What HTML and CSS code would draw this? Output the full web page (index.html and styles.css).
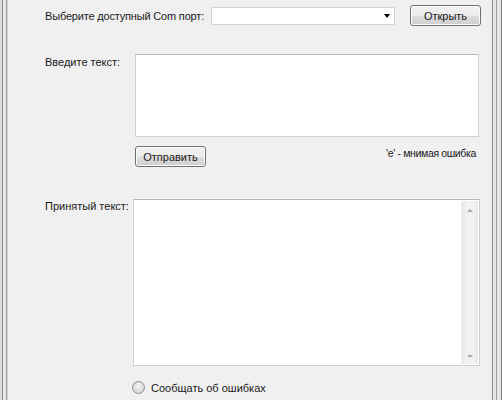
FILE: index.html
```html
<!DOCTYPE html>
<html lang="ru">
<head>
<meta charset="utf-8">
<title>Com port</title>
<link rel="stylesheet" href="styles.css">
</head>
<body>
<div class="frame">
  <div class="row row-port">
    <span class="label label-port">Выберите доступный Com порт:</span>
    <div class="combo"><span class="combo-arrow"></span></div>
    <button class="btn btn-open">Открыть</button>
  </div>
  <div class="row row-send">
    <span class="label label-send">Введите текст:</span>
    <div class="textbox textbox-send"></div>
  </div>
  <div class="row row-action">
    <button class="btn btn-send">Отправить</button>
    <span class="hint">'e' - мнимая ошибка</span>
  </div>
  <div class="row row-recv">
    <span class="label label-recv">Принятый текст:</span>
    <div class="textbox textbox-recv">
      <div class="scrollbar">
        <span class="arrow-up"></span>
        <span class="arrow-down"></span>
      </div>
    </div>
  </div>
  <div class="row row-radio">
    <span class="radio"></span>
    <span class="radio-label">Сообщать об ошибках</span>
  </div>
</div>
</body>
</html>
```
FILE: styles.css
```css
html, body {
  margin: 0;
  padding: 0;
  background: #f0f0f0;
}
.frame {
  width: 502px;
  height: 400px;
  box-sizing: border-box;
  overflow: hidden;
  background: #f0f0f0;
  font-family: "Liberation Sans", Arial, sans-serif;
  font-size: 11px;
  color: #1a1a1a;
  box-shadow:
    inset 2px 0 0 #dcdcdc,
    inset 3px 0 0 #8c8c8c,
    inset 6px 0 0 #e6e6e6,
    inset 7px 0 0 #a3a3a3,
    inset 8px 0 0 #d0d0d0,
    inset -1px 0 0 #7a7a7a,
    inset -5px 0 0 #e6e6e6,
    inset -6px 0 0 #a3a3a3,
    inset -9px 0 0 #e6e6e6,
    inset -10px 0 0 #8c8c8c;
}
.row {
  display: flex;
}
.row-port {
  align-items: center;
  padding: 5px 0 0 45px;
  height: 21px;
}
.label-port {
  width: 166px;
  padding-top: 1px;
  letter-spacing: -0.18px;
}
.combo {
  position: relative;
  width: 184px;
  height: 18px;
  box-sizing: border-box;
  background: #fff;
  border: 1px solid #d2d2d2;
  margin-right: 15px;
}
.combo-arrow {
  position: absolute;
  right: 4px;
  top: 6px;
  width: 0;
  height: 0;
  border-left: 3.5px solid transparent;
  border-right: 3.5px solid transparent;
  border-top: 4px solid #000;
}
.btn {
  width: 71px;
  height: 21px;
  box-sizing: border-box;
  padding: 0;
  border: 1px solid #707070;
  border-radius: 3px;
  background: linear-gradient(#f2f2f2 0%, #ebebeb 50%, #dddddd 51%, #cfcfcf 100%);
  box-shadow: inset 0 0 0 1px #fcfcfc;
  font-family: "Liberation Sans", Arial, sans-serif;
  font-size: 11px;
  color: #1a1a1a;
}
.row-send {
  margin-top: 28px;
  padding-left: 45px;
}
.label-send {
  width: 90px;
  padding-top: 2px;
}
.textbox {
  box-sizing: border-box;
  background: #fff;
  border: 1px solid #d0d0d0;
  border-top-color: #b5b5b5;
}
.textbox-send {
  width: 344px;
  height: 83px;
}
.row-action {
  margin-top: 9px;
  padding-left: 135px;
  width: 341px;
  justify-content: space-between;
  align-items: flex-start;
}
.hint {
  padding-top: 1px;
  font-size: 10.5px;
  letter-spacing: -0.35px;
}
.row-recv {
  margin-top: 32px;
  padding-left: 45px;
}
.label-recv {
  width: 88px;
  padding-top: 1px;
}
.textbox-recv {
  width: 347px;
  height: 167px;
  display: flex;
  justify-content: flex-end;
  padding: 1px;
}
.scrollbar {
  width: 17px;
  display: flex;
  flex-direction: column;
  justify-content: space-between;
  align-items: center;
  background: linear-gradient(90deg, #e8e8e8, #f2f2f2 30%, #f2f2f2 70%, #e8e8e8);
  border-left: 1px solid #ededed;
  padding: 8px 0 6px;
  box-sizing: border-box;
}
.arrow-up, .arrow-down {
  width: 0;
  height: 0;
  border-left: 3.5px solid transparent;
  border-right: 3.5px solid transparent;
}
.arrow-up {
  border-bottom: 3px solid #a8a8a8;
}
.arrow-down {
  border-top: 3px solid #a8a8a8;
}
.row-radio {
  margin-top: 15px;
  padding-left: 132px;
  align-items: center;
}
.radio {
  width: 13px;
  height: 13px;
  box-sizing: border-box;
  border-radius: 50%;
  border: 1px solid #8e8f8f;
  background: radial-gradient(circle at 50% 40%, #f4f4f4 0%, #dcdcdc 60%, #cfcfcf 100%);
  margin-right: 6px;
}
.radio-label {
  padding-top: 1px;
}
```
